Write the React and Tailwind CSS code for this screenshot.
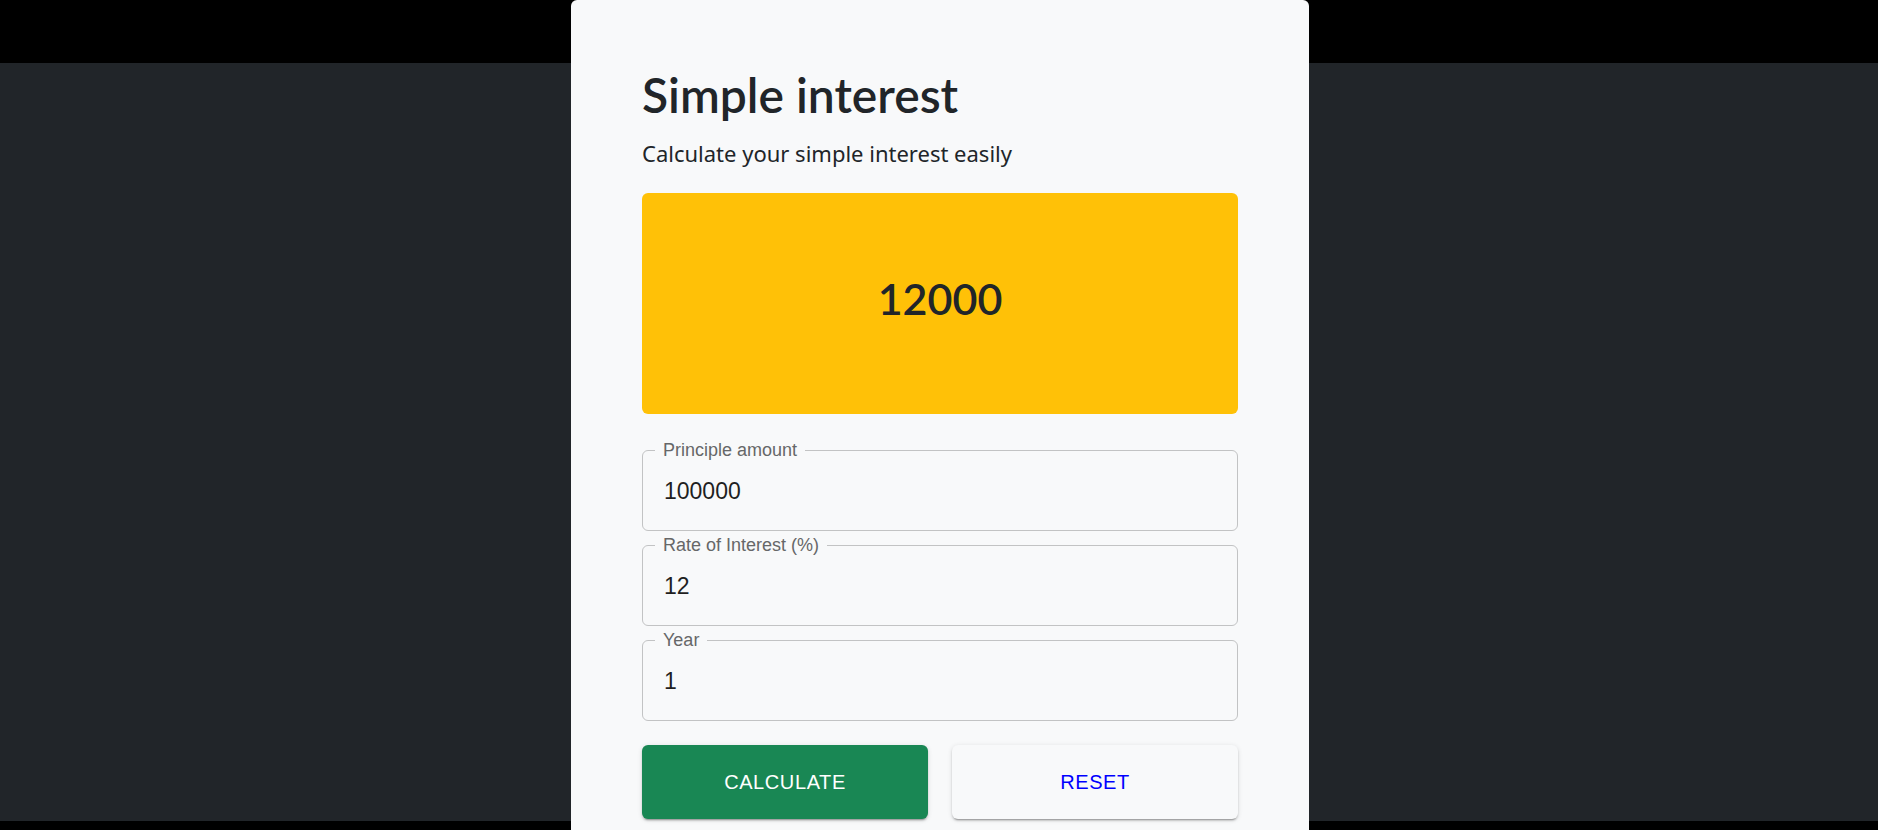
import React from "react";

const fields = [
  { label: "Principle amount", value: "100000" },
  { label: "Rate of Interest (%)", value: "12" },
  { label: "Year", value: "1" },
];

const Field = ({ label, value }) => (
  <fieldset className="rounded-[6px] border border-[#c2c3c4] px-[12px] pb-[6px]">
    <legend className="px-[8px] font-['Liberation_Sans',Arial,sans-serif] text-[18px] leading-[18px] text-[#666768]">
      {label}
    </legend>
    <input
      type="text"
      defaultValue={value}
      className="block h-[65px] w-full bg-transparent pl-[9px] font-['Liberation_Sans',Arial,sans-serif] text-[23px] text-[#1f1f1f] outline-none"
    />
  </fieldset>
);

const App = () => {
  return (
    <div className="h-[830px] overflow-hidden bg-black pt-[63px]">
      <div className="flex h-[758px] justify-center bg-[#212529] pl-[2px]">
        <div className="-mt-[63px] h-[900px] w-[738px] shrink-0 rounded-md bg-[#f8f9fa] px-[71px] pt-[67px] font-['Noto_Sans',sans-serif] text-[#212529]">
          <h1 className="font-['Lato','Noto_Sans',sans-serif] text-[48px] font-semibold leading-[56px]">
            Simple interest
          </h1>
          <p className="mt-[15px] text-[22px] leading-[30px]">
            Calculate your simple interest easily
          </p>

          <div className="mt-[25px] flex h-[221px] items-center justify-center rounded-[6px] bg-[#ffc107] pb-[10px]">
            <span className="font-['Lato','Noto_Sans',sans-serif] text-[43px] font-semibold leading-none">
              12000
            </span>
          </div>

          <div className="mt-[27px] flex flex-col gap-[5px]">
            {fields.map((f) => (
              <Field key={f.label} label={f.label} value={f.value} />
            ))}
          </div>

          <div className="mt-[24px] grid grid-cols-2 gap-[24px]">
            <button className="h-[74px] rounded-[6px] bg-[#198754] font-['Liberation_Sans',Arial,sans-serif] text-[20px] tracking-[0.6px] text-white uppercase shadow-[0_3px_1px_-2px_rgba(0,0,0,0.2),0_2px_2px_0_rgba(0,0,0,0.14),0_1px_5px_0_rgba(0,0,0,0.12)]">
              Calculate
            </button>
            <button className="h-[74px] rounded-[6px] bg-[#f8f9fa] font-['Liberation_Sans',Arial,sans-serif] text-[20px] tracking-[0.6px] text-[#0000ff] uppercase shadow-[0_3px_1px_-2px_rgba(0,0,0,0.2),0_2px_2px_0_rgba(0,0,0,0.14),0_1px_5px_0_rgba(0,0,0,0.12)]">
              Reset
            </button>
          </div>
        </div>
      </div>
    </div>
  );
};

export default App;
